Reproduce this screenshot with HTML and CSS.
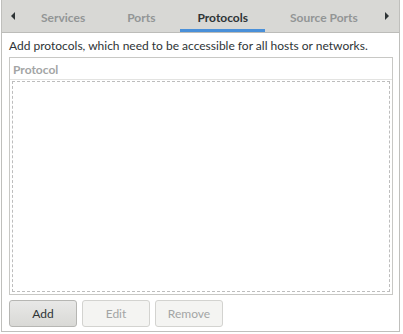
FILE: index.html
```html
<!DOCTYPE html>
<html lang="en">
<head>
    <meta charset="UTF-8">
    <title>Protocols</title>
    <link rel="stylesheet" href="styles.css">
</head>
<body>
    <div class="notebook">
        <div class="tab-bar">
            <span class="arrow arrow-left"></span>
            <div class="tabs">
                <div class="tab">Services</div>
                <div class="tab">Ports</div>
                <div class="tab active">Protocols</div>
                <div class="tab">Source Ports</div>
            </div>
            <span class="arrow arrow-right"></span>
        </div>
        <div class="page">
            <p class="hint">Add protocols, which need to be accessible for all hosts or networks.</p>
            <div class="list">
                <div class="list-header">Protocol</div>
                <div class="list-body"></div>
            </div>
            <div class="actions">
                <button class="btn" type="button">Add</button>
                <button class="btn" type="button" disabled>Edit</button>
                <button class="btn" type="button" disabled>Remove</button>
            </div>
        </div>
    </div>
</body>
</html>
```

FILE: styles.css
```css
* {
    margin: 0;
    padding: 0;
    box-sizing: border-box;
}

body {
    background: #ffffff;
    font-family: Lato, "Noto Sans", sans-serif;
    font-size: 12px;
    color: #2e3436;
}

.notebook {
    width: 399px;
    height: 332px;
    margin-left: 1px;
    border: 1px solid #bfbfbc;
    border-top: none;
    display: flex;
    flex-direction: column;
}

.tab-bar {
    height: 33px;
    background: #d8d8d5;
    border-bottom: 1px solid #bcbcb9;
    display: flex;
    align-items: stretch;
}

.arrow {
    width: 22px;
    flex-shrink: 0;
    display: flex;
    align-items: center;
    justify-content: center;
}

.arrow-right {
    width: 24px;
}

.arrow::before {
    content: "";
    border-top: 4px solid transparent;
    border-bottom: 4px solid transparent;
}

.arrow-left::before {
    border-right: 4px solid #2e3436;
}

.arrow-right::before {
    border-left: 4px solid #2e3436;
}

.tabs {
    flex: 1;
    display: flex;
    gap: 8px;
    overflow: hidden;
}

.tab {
    padding: 5px 17px 0;
    display: flex;
    align-items: center;
    white-space: nowrap;
    font-weight: bold;
    color: #929595;
    border-bottom: 3px solid transparent;
}

.tab.active {
    color: #2e3436;
    border-bottom-color: #4a90d9;
}

.page {
    flex: 1;
    padding: 4px 6px 4px 7px;
    display: flex;
    flex-direction: column;
}

.hint {
    line-height: 17px;
    margin-bottom: 3px;
    white-space: nowrap;
}

.list {
    flex: 1;
    border: 1px solid #c8c8c5;
    display: flex;
    flex-direction: column;
    padding: 0 2px 2px 2px;
}

.list-header {
    height: 22px;
    line-height: 23px;
    padding-left: 3px;
    margin: 0 -2px;
    font-weight: bold;
    color: #a3a5a5;
    border-bottom: 1px solid #e3e3e1;
}

.list-body {
    flex: 1;
    border: 1px dashed #bdbdbd;
    margin-top: 1px;
}

.actions {
    display: flex;
    gap: 5px;
    padding-top: 5px;
}

.btn {
    width: 68px;
    height: 27px;
    font-family: inherit;
    font-size: 12px;
    color: #2e3436;
    background: linear-gradient(#e8e8e7, #d9d9d6);
    border: 1px solid #b6b6b3;
    border-radius: 3px;
}

.btn:disabled {
    color: #a3a5a5;
    background: #f4f4f2;
    border-color: #d3d3d0;
}
```
